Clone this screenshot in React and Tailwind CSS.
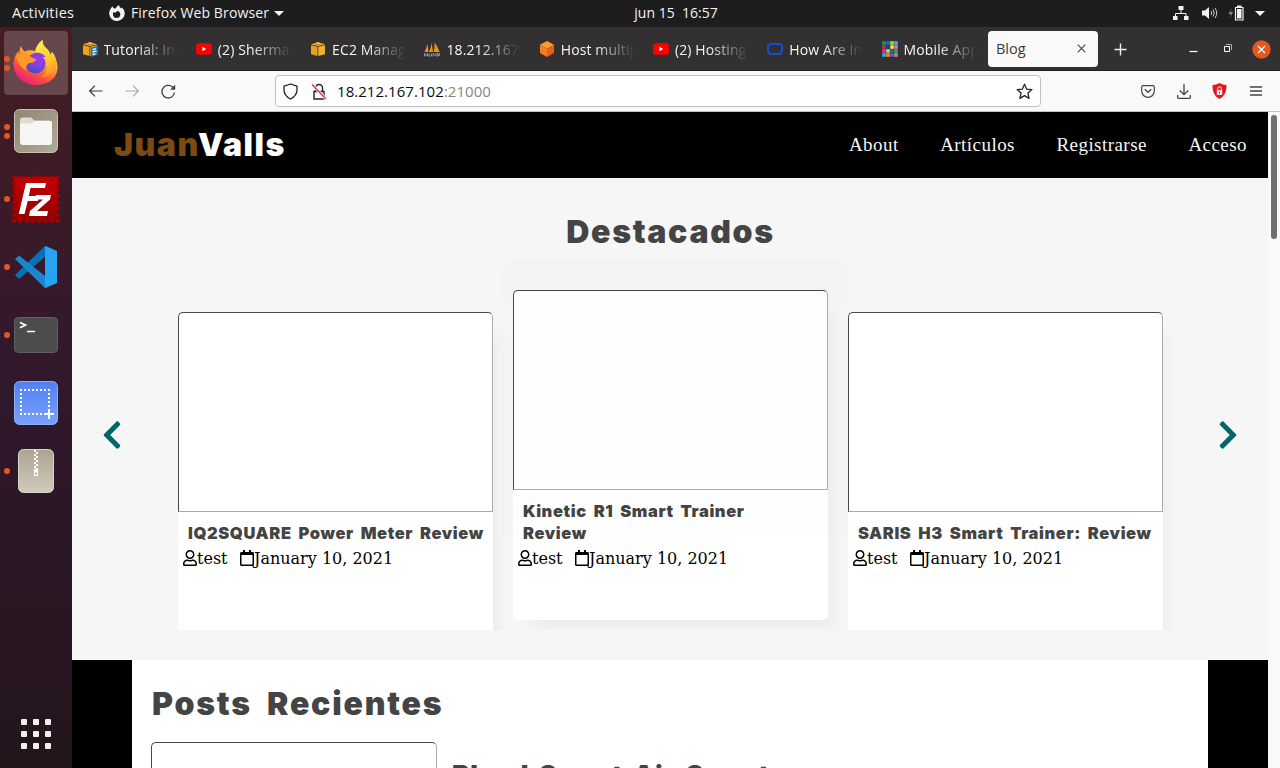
import React from 'react';
import { FaRegUser, FaRegCalendar, FaChevronLeft, FaChevronRight } from 'react-icons/fa';

const Youtube = () => (
  <svg width="16" height="16" viewBox="0 0 16 16"><rect y="2.2" width="16" height="11.6" rx="3" fill="#f00" /><path d="M6.4 5.8v4.4L10.2 8z" fill="#fff" /></svg>
);

const Cube = ({ page }) => (
  <svg width="16" height="16" viewBox="0 0 16 16">
    <path d="M1 3.500 8 1l7 2.500-7 1.600z" fill="#fbbf3b" />
    <path d="M1 4.300l6.500 1.500V15L1 13.200z" fill="#e9a11f" />
    <path d="M15 4.300 8.300 5.800V15L15 13.200z" fill="#f3b02c" />
    <path d="M3.200 2.600 8 4l4.800-1.400" stroke="#a86d0a" strokeWidth=".8" fill="none" />
    {page && <><path d="M9 6.500 16 5v9l-7 2z" fill="#1b74ab" /><path d="M10.500 8.500l3.500-.7M10.500 11l4-.8M10.500 13.500l3-.6" stroke="#fff" strokeWidth="1.300" /></>}
  </svg>
);

const Sails = () => (
  <svg width="16" height="16" viewBox="0 0 16 16">
    <path d="M.5 11C2 8 3 5 3.500 2.500L4.500 11zM5 11C6.500 8 7.500 4 7.600 1L9 11zM9.700 11c.8-3 1-6 .8-9.500C12.500 4 14.500 8 15.500 11z" fill="#f29111" />
    <path d="M.5 15.500v-3l1.500 2 1.500-2v3M5 12.500v2.500h2.500v-2.500M9 15.500v-3l1.500 2 1.500-2v3M13.500 15.500v-3h2v2h-2" fill="none" stroke="#8c90c4" strokeWidth="1" />
  </svg>
);

const Hexagon = () => (
  <svg width="16" height="16" viewBox="0 0 16 16"><path d="M8 0l7 3.800L8 8 1 3.800z" fill="#ff9a2e" /><path d="M1 3.800 8 8v8l-7-4z" fill="#f47b20" /><path d="M15 3.800 8 8v8l7-4z" fill="#e8611a" /></svg>
);

const BlueFrame = () => (
  <svg width="16" height="16" viewBox="0 0 16 16"><path d="M3 3h10l2 1.500v6L13 13H3l-2-2.500v-6z" fill="none" stroke="#1150d4" strokeWidth="2" strokeLinejoin="round" /></svg>
);

const MOSAIC = ['#0a9e6b', '#1b6fd0', '#b5d334', '#5ba7e0', '#e12b2b', '#0b43a8', '#ffe02e', '#ee6fa8', '#d63a8c', '#b9d66c', '#2f62b9', '#25b15f', '#18b7ee', '#f48a1d', '#7a57a5', '#e26bb0'];
const Mosaic = () => (
  <svg width="16" height="16" viewBox="0 0 16 16">
    {MOSAIC.map((c, i) => <rect key={i} x={(i % 4) * 4 + 0.200} y={Math.floor(i / 4) * 4 + 0.200} width="3.600" height="3.600" fill={c} />)}
  </svg>
);

const TABS = [
  [<Cube page />, 'Tutorial: Ins'],
  [<Youtube />, '(2) Sherma'],
  [<Cube />, 'EC2 Manag'],
  [<Sails />, '18.212.167'],
  [<Hexagon />, 'Host multip'],
  [<Youtube />, '(2) Hosting'],
  [<BlueFrame />, 'How Are In'],
  [<Mosaic />, 'Mobile App'],
];

const FirefoxLogo = () => (
  <svg width="46" height="46" viewBox="0 0 46 46" className="-mt-[2px]">
    <defs>
      <linearGradient id="fx" x1=".8" y1=".05" x2=".25" y2="1"><stop offset="0" stopColor="#fff44f" /><stop offset=".35" stopColor="#ffb32b" /><stop offset=".65" stopColor="#ff5a36" /><stop offset="1" stopColor="#e31587" /></linearGradient>
      <radialGradient id="globe" cx=".65" cy=".3" r=".8"><stop offset="0" stopColor="#a234f0" /><stop offset=".5" stopColor="#7a45e0" /><stop offset="1" stopColor="#3b4fb5" /></radialGradient>
      <linearGradient id="flame" x1=".4" y1="0" x2=".7" y2="1"><stop offset="0" stopColor="#fff04c" /><stop offset=".6" stopColor="#ffc02e" /><stop offset="1" stopColor="#ff8a2a" /></linearGradient>
    </defs>
    <path d="M8 7c.5 2 2 4 3.500 5.500C15 11 19 11 22 12c1-4 3.500-8 7.500-11-.3 4 1.500 6.500 4.500 9 2 2 3 4 3.500 6l1.500-3c4 6 6 12 5.500 17C43.500 39.500 35 46 23 46 11 46 1 38 .5 26 .2 20 2.500 15 5.500 12c0 1 .3 2 .8 2.500C6.500 11.500 7 9 8 7z" fill="url(#fx)" />
    <path d="M29.500 1c-4 3-7.500 8-6.500 13 1 4 6 5 9 9 4 6 1 13-4 15 8 0 14-5 15-12 .8-5-.5-9.500-4-13l-1.500 3c-.5-2-1.500-4-3.500-6-3-2.500-4.800-5-4.500-9z" fill="url(#flame)" />
    <circle cx="22.500" cy="24.500" r="10" fill="url(#globe)" />
    <path d="M3 17c5-3 13-3 15 1 2 1.500 4 1.500 5 2-.5 3-4 4-7 4-2 2-4 4-2 8-5-2-10-8-11-15z" fill="#ff9a2a" />
    <path d="M20 14.500c5-2 11 .5 13 4-3-1-5-1-7 0" fill="#8a3be8" />
  </svg>
);

const FilesLogo = () => (
  <svg width="46" height="46" viewBox="0 0 46 46">
    <defs><linearGradient id="fl" x1="0" y1="0" x2="1" y2="1"><stop offset="0" stopColor="#8f8672" /><stop offset="1" stopColor="#b0aa98" /></linearGradient></defs>
    <rect x="1.500" y="1.500" width="43" height="43" rx="5" fill="url(#fl)" stroke="#c5c0b0" />
    <path d="M7 12q0-2.500 2.500-2.500H18l3.500 3H36q3 0 3 3V20H7z" fill="#dfdcd0" />
    <path d="M7 15.500h11l4-2.500h14.500q2.500 0 2.500 2.500V34q0 3-3 3H10q-3 0-3-3z" fill="#f7f6f4" />
  </svg>
);

const ZillaLogo = () => (
  <svg width="48" height="48" viewBox="0 0 48 48">
    <defs><linearGradient id="fz" x1="0" y1="0" x2="0" y2="1"><stop offset="0" stopColor="#c50000" /><stop offset="1" stopColor="#900000" /></linearGradient></defs>
    <rect x="2" y="2" width="44" height="44" fill="url(#fz)" />
    <rect x="2" y="2" width="44" height="44" fill="none" stroke="#a80000" strokeWidth="4" strokeDasharray="0 6.286" strokeLinecap="round" />
    <path d="M14 8h20l-1 5H18.500l-1.700 8H27l-1 5H15.800L12.500 39H6.800zM24 20h15l-1 4.500L25 36h11l-1 5H17l1-5 13-11.500h-8z" fill="#fff" />
  </svg>
);

const CodeLogo = () => (
  <svg width="44" height="44" viewBox="0 0 44 44">
    <path d="M1 30 31 1l1 10L5 34z" fill="#0871b5" />
    <path d="M1 14 5 10.500l28 22L31 43z" fill="#1787cf" />
    <path d="M31.500 1 43 6v32l-11.500 5q-1 0-.5-2V3q-.5-2 .5-2z" fill="#27a3f2" />
  </svg>
);

const TerminalLogo = () => (
  <svg width="46" height="38" viewBox="0 0 46 38">
    <rect x="1.500" y="1.500" width="43" height="35" rx="4" fill="#4c4c4c" stroke="#60605e" />
    <path d="M7 6.500 12.500 9 7 11.700M14 15.500h8" stroke="#fff" strokeWidth="1.700" fill="none" />
  </svg>
);

const ShotLogo = () => (
  <svg width="46" height="46" viewBox="0 0 46 46">
    <defs><linearGradient id="sh" x1="0" y1="0" x2="0" y2="1"><stop offset="0" stopColor="#5180f2" /><stop offset="1" stopColor="#7ba1fa" /></linearGradient></defs>
    <rect x="1.500" y="1.500" width="43" height="43" rx="5" fill="url(#sh)" stroke="#8eb0f8" />
    <path d="M7 10h30M8 13v22M36 13v16M11 34h20" stroke="#fff" strokeWidth="2" strokeDasharray="2 2" fill="none" />
    <path d="M31 34h10M36 29v10" stroke="#fff" strokeWidth="2" />
  </svg>
);

const ArchiveLogo = () => (
  <svg width="38" height="46" viewBox="0 0 38 46">
    <defs><linearGradient id="ar" x1="0" y1="0" x2="0" y2="1"><stop offset="0" stopColor="#aca48f" /><stop offset="1" stopColor="#cfcbbd" /></linearGradient></defs>
    <rect x="1.500" y="1.500" width="35" height="43" rx="5" fill="url(#ar)" stroke="#d9d6ca" />
    <path d="M18 2v19" stroke="#fff" strokeWidth="2" strokeDasharray="2 2" />
    <path d="M20 4v19" stroke="#fff" strokeWidth="2" strokeDasharray="2 2" />
    <path d="M17 21h4v7h-4z" fill="#fff" /><path d="M18.200 24.500h1.600v2h-1.600z" fill="#999" />
  </svg>
);

const DOCK = [
  [2, <FirefoxLogo />, true],
  [2, <FilesLogo />],
  [1, <ZillaLogo />],
  [1, <CodeLogo />],
  [1, <TerminalLogo />],
  [0, <ShotLogo />],
  [1, <ArchiveLogo />],
];

const Dock = () => (
  <aside className="flex w-[72px] shrink-0 flex-col items-center gap-1 bg-linear-to-b from-[#451c22] via-[#30182d] to-[#23151c] pt-1 pb-[2px]">
    {DOCK.map(([dots, logo, active], i) => (
      <div key={i} className={'relative flex size-16 items-center justify-center rounded ' + (active ? 'bg-[#66484c]' : '')}>
        <span className="absolute left-0 flex h-full flex-col items-center justify-center gap-[3px]">
          {Array.from({ length: dots }, (_, d) => <i key={d} className="block size-[6px] rounded-full bg-[#e95420]" />)}
        </span>
        {logo}
      </div>
    ))}
    <div className="mt-auto flex size-16 items-center justify-center">
      <div className="grid grid-cols-3 gap-[6px]">
        {Array.from({ length: 9 }, (_, i) => <i key={i} className="block size-[6px] rounded-[1px] bg-[#f2f1f0]" />)}
      </div>
    </div>
  </aside>
);

const TopBar = () => (
  <header className="grid h-[27px] shrink-0 grid-cols-[1fr_auto_1fr] items-center bg-[#1d1d1d] pb-px text-[14px] leading-none text-[#f2f2f2]">
    <div className="flex items-center pl-3">
      <span className="w-[97px] text-[14.500px] tracking-[0.250px] whitespace-nowrap">Activities</span>
      <svg width="16" height="16" viewBox="0 0 16 16"><path d="M3.300 1.500 5 3.500 7 3.200C7.500 1.500 9 .5 10 0c0 1.500 1 2.500 2.500 3.500L13 2.500C15 4.500 16 7 15.700 9.200A7.800 7.800 0 0 1 .2 9C0 6 1.500 3.500 3.300 1.500z" fill="#f2f2f2" /><path d="M4 7.200c1.500.8 3.500.4 4-1.200 2 .2 3.300 1.500 3.300 3.400A3.700 3.700 0 0 1 4 10z" fill="#1d1d1d" /></svg>
      <span className="ml-[6px] w-[138px] tracking-[0.120px] whitespace-nowrap">Firefox Web Browser</span>
      <svg className="ml-[5px]" width="10" height="5" viewBox="0 0 10 5"><path d="M0 0h10L5 5z" fill="#f2f2f2" /></svg>
    </div>
    <span className="pl-[72px] whitespace-pre">jun 15  16:57</span>
    <div className="flex items-center justify-end pr-[15px]">
      <svg width="16" height="14" viewBox="0 0 16 14"><path d="M5.500 0h5v4h-5zM0 10h4.500v4H0zM11 10h4.500v4H11z" fill="#f2f2f2" /><path d="M8 4v3M2.500 10V7.500h10.500V10" stroke="#f2f2f2" fill="none" /></svg>
      <svg className="ml-[13px]" width="16" height="14" viewBox="0 0 16 14"><path d="M0 4.500h3L7 1v12L3 9.500H0z" fill="#f2f2f2" /><path d="M9 5q1.500 2 0 4M11 3.500q2.500 3.500 0 7M13 2q3.500 5 0 10" stroke="#ccc" fill="none" /></svg>
      <svg className="ml-[10px]" width="16" height="16" viewBox="0 0 16 16"><path d="M4 3 .5 9H3l-1 4 3-6H2.500z" fill="#888" /><path d="M7.500 2.500h7.500v12.500H7.500z" fill="none" stroke="#f2f2f2" strokeWidth="1.200" /><path d="M9 4h4.500v9.500H9zM9 .5h4.500v2H9z" fill="#f2f2f2" /></svg>
      <svg className="ml-[11px]" width="10" height="5" viewBox="0 0 10 5"><path d="M0 0h10L5 5z" fill="#f2f2f2" /></svg>
    </div>
  </header>
);

const TabStrip = () => (
  <div className="flex h-[44px] shrink-0 items-center border-b border-[#201e1f] bg-[#333031] text-[14px] text-[#f5f5f5]">
    {TABS.map(([icon, label], i) => (
      <div key={i} className="flex w-[114.300px] shrink-0 items-center gap-[6px] pl-[9.500px]">
        <span className="size-4 shrink-0">{icon}</span>
        <span className="-mr-2 w-[80px] overflow-hidden pt-[2px] tracking-[0.120px] whitespace-nowrap [mask-image:linear-gradient(to_right,black_42%,transparent_92%)]">{label}</span>
      </div>
    ))}
    <div className="ml-[1.600px] flex h-9 w-[110px] shrink-0 items-center justify-between rounded bg-[#f9f9f9] pr-3 pl-2 text-[14.500px] text-[#3b3b3b]">
      <span className="pt-px">Blog</span>
      <svg width="9" height="9" viewBox="0 0 9 9"><path d="M.7.7l7.600 7.600M8.300.7.7 8.300" stroke="#444" strokeWidth="1.100" /></svg>
    </div>
    <svg className="mt-[2px] ml-[16px]" width="13" height="13" viewBox="0 0 13 13"><path d="M6.500.5v12M.5 6.500h12" stroke="#eee" strokeWidth="1.400" /></svg>
    <div className="ml-auto flex items-center pr-[9px]">
      <svg width="9" height="10" viewBox="0 0 9 10"><path d="M.5 7.500h8" stroke="#fff" strokeWidth="1.200" /></svg>
      <svg className="ml-[25px]" width="9" height="9" viewBox="0 0 9 9"><path d="M1.500 2.500h5v5h-5z" stroke="#fff" strokeWidth="1" fill="none" /><path d="M3 .5h5.500V6" stroke="#aaa" fill="none" /></svg>
      <svg className="mt-px ml-[20px]" width="19" height="19" viewBox="0 0 19 19"><circle cx="9.500" cy="9.500" r="9.200" fill="#e95420" /><path d="M6 6l7 7M13 6l-7 7" stroke="#fff" strokeWidth="1.200" /></svg>
    </div>
  </div>
);

const Toolbar = () => (
  <div className="flex h-[41px] shrink-0 items-center border-b border-[#c2c2c2] bg-[#f9f9fa]">
    <svg className="ml-[17px]" width="14" height="12" viewBox="0 0 14 12"><path d="M13.500 6H.8M6 .7.7 6 6 11.300" stroke="#3c3c3c" strokeWidth="1.200" fill="none" /></svg>
    <svg className="ml-[22px]" width="14" height="12" viewBox="0 0 14 12"><path d="M.5 6h12.700M8 .7 13.300 6 8 11.300" stroke="#acacac" strokeWidth="1.200" fill="none" /></svg>
    <svg className="ml-[22px]" width="15" height="15" viewBox="0 0 15 15"><path d="M13.500 8.500A6.300 6.300 0 1 1 11.500 3L13 4.500" stroke="#3c3c3c" strokeWidth="1.300" fill="none" /><path d="M14.200.8v5H9.200z" fill="#3c3c3c" /></svg>
    <div className="ml-[99px] flex h-8 w-[766px] shrink-0 items-center rounded border border-[#c0c0c0] bg-white pr-[7px] pl-[7px]">
      <svg width="15" height="17" viewBox="0 0 15 17"><path d="M7.500 1 14 3.200v3.600c0 4-2.500 7.200-6.500 9.200C3.500 14 1 10.800 1 6.800V3.200z" fill="none" stroke="#222" strokeWidth="1.300" strokeLinejoin="round" /></svg>
      <svg className="ml-[13px]" width="16" height="17" viewBox="0 0 16 17"><path d="M3 8.500h10V16H3zM4.500 8V5a3.500 3.500 0 0 1 7 0v3" stroke="#222" strokeWidth="1.400" fill="none" /><path d="M1 1.500 15 16" stroke="#fff" strokeWidth="3" /><path d="M1 1.500 15 16" stroke="#e22850" strokeWidth="1.300" /></svg>
      <span className="ml-[10px] text-[15px] tracking-[0.050px] text-[#0c0c0d]">18.212.167.102<span className="text-[#858585]">:21000</span></span>
      <svg className="ml-auto" width="17" height="17" viewBox="0 0 17 17"><path d="m8.500 1.200 2.100 4.900 5.300.5-4 3.500 1.200 5.300-4.600-2.800-4.600 2.800 1.200-5.300-4-3.500 5.300-.5z" fill="none" stroke="#222" strokeWidth="1.300" strokeLinejoin="round" /></svg>
    </div>
    <div className="ml-auto flex items-center pr-[18px]">
      <svg width="14" height="13" viewBox="0 0 14 13"><path d="M2 .7h10q1.300 0 1.300 1.300v4A6.300 6.300 0 0 1 .7 6V2Q.7.7 2 .7z" stroke="#444" strokeWidth="1.200" fill="none" /><path d="m3.700 4.300 3.300 3 3.300-3" stroke="#444" strokeWidth="1.300" fill="none" /></svg>
      <svg className="ml-[22px]" width="14" height="15" viewBox="0 0 14 15"><path d="M7 0v10.500M2.700 6.500 7 10.700l4.300-4.200M.7 11v2.500q0 .8.8.8h11q.8 0 .8-.8V11" stroke="#444" strokeWidth="1.300" fill="none" /></svg>
      <svg className="ml-[21px]" width="15" height="16" viewBox="0 0 15 16"><path d="M7.500 0c2 1.300 4.500 2 7 2 0 6-1.500 11-7 14C2 13 .5 8 .5 2c2.500 0 5-.7 7-2z" fill="#e8131b" /><path d="M4.800 7.200h5.400v4.600H4.800z" fill="#fff" /><path d="M5.700 7V5.500a1.800 1.800 0 0 1 3.600 0V7" stroke="#fff" fill="none" /><path d="M7.500 8.500v2" stroke="#e8131b" /></svg>
      <svg className="ml-[23px]" width="12" height="10" viewBox="0 0 12 10"><path d="M0 1h12M0 5h12M0 9h12" stroke="#444" strokeWidth="1.300" /></svg>
    </div>
  </div>
);

const Card = ({ title, featured }) => (
  <article className={'flex w-[315px] shrink-0 flex-col bg-white shadow-[12px_16px_16px_-6px_rgba(0,0,0,0.040)] ' + (featured ? 'mt-[30px] h-[330px] rounded-[5px]' : 'mt-[52px] h-[330px] rounded-t-[5px]')}>
    <div className="h-[200px] shrink-0 rounded-t-[5px] border border-t-[#494949] border-r-[#acacac] border-b-[#acacac] border-l-[#494949]" />
    <h4 className="mt-[10px] pl-[10px] font-['Inter'] text-[16.500px] leading-[22px] font-black tracking-[0.600px] whitespace-pre text-[#444] [word-spacing:3px]">{title}</h4>
    <p className="mt-[5px] flex items-center pl-[5px] font-['DejaVu_Serif',serif] text-[16px] leading-[20px] text-black">
      <FaRegUser className="-mt-[2px] w-[14px]" /><span className="w-[43px]">test</span><FaRegCalendar className="-mt-[2px] w-[14px]" />January 10, 2021
    </p>
  </article>
);

const GhostDialog = () => (
  <div className="pointer-events-none absolute top-[83px] left-[430px] h-[275px] w-[346px] rounded-t-lg bg-black/[0.004] text-[12px] leading-[22px] text-black/[0.018]">
    <div className="flex h-[38px] items-center justify-between rounded-t-lg bg-black/[0.006] pt-[2px] pr-5 pl-[85px] text-[11.500px] text-white/40"><span>Cancel</span><span>Take Screenshot</span></div>
    <div className="flex flex-col pl-[11px]">
      <b className="mt-[2px]">Take Screenshot</b>
      <div className="flex flex-col pl-[66px]"><span>Grab the whole screen</span><span>Grab the current window</span><span>Select area to grab</span></div>
      <div className="mt-[5px] flex justify-between pr-[30px] pl-[47px]"><span>Grab after a delay of&nbsp;&nbsp;&nbsp;0</span><span>seconds</span></div>
      <b className="mt-[13px]">Effects</b>
      <span className="pl-[28px]">Include pointer</span>
      <span className="pl-[28px]">Include the window border</span>
    </div>
  </div>
);

const Page = () => (
  <main className="flex min-h-0 flex-1 overflow-hidden bg-[#f9f9f9]">
    <div className="flex w-[1196px] shrink-0 flex-col overflow-hidden">
      <nav className="flex h-[66px] shrink-0 items-center bg-black pr-[21px] pl-[42px]">
        <div className="font-['Inter'] text-[32px] leading-none font-black tracking-[1.500px] text-white"><span className="text-[#7c4b11]">Juan</span>Valls</div>
        <div className="ml-auto flex gap-[41.500px] font-['Liberation_Serif',serif] text-[19px] tracking-[0.450px] text-[#f5f5f5]">
          <span>About</span><span>Artículos</span><span>Registrarse</span><span>Acceso</span>
        </div>
      </nav>
      <section className="relative flex h-[482px] shrink-0 flex-col bg-[#f6f6f6]">
        <h2 className="mt-[31px] pl-[1px] text-center font-['Inter'] text-[32px] leading-[45px] font-black tracking-[1.700px] text-[#444]">Destacados</h2>
        <div className="mt-[6px] flex h-[370px]">
          <div className="flex w-[96px] shrink-0 justify-center pt-[159px] pr-[16px] text-[#006669]"><FaChevronLeft size={32} /></div>
          <div className="flex w-[1005px] gap-5 overflow-hidden pl-[10px]">
            <Card title="IQ2SQUARE Power Meter Review" />
            <Card title={'Kinetic R1 Smart Trainer\nReview'} featured />
            <Card title="SARIS H3 Smart Trainer: Review" />
          </div>
          <div className="flex w-[95px] shrink-0 justify-center pt-[159px] pl-[15px] text-[#006669]"><FaChevronRight size={32} /></div>
        </div>
        <GhostDialog />
      </section>
      <section className="flex min-h-0 flex-1 bg-black px-[60px]">
        <div className="flex flex-1 flex-col bg-white pl-[19px]">
          <h2 className="mt-[21px] pl-[1px] font-['Inter'] text-[32px] leading-[45px] font-black tracking-[1.800px] text-[#444] [word-spacing:7px]">Posts Recientes</h2>
          <div className="mt-4 flex">
            <div className="h-[200px] w-[286px] shrink-0 rounded-t-[5px] border border-t-[#494949] border-r-[#acacac] border-b-[#acacac] border-l-[#494949]" />
            <h3 className="mt-[15px] ml-[15px] font-['Inter'] text-[26px] leading-[36px] font-black tracking-[0.900px] text-[#444] [word-spacing:4px]">Bkool Smart Air Smart</h3>
          </div>
        </div>
      </section>
    </div>
    <div className="w-3 pt-[3px] pl-[3px]"><div className="h-[124px] w-[6px] rounded-full bg-[#6f6f6f]" /></div>
  </main>
);

export default function App() {
  return (
    <div className="flex h-[768px] w-[1280px] flex-col overflow-hidden bg-white font-['Open_Sans','Noto_Sans',sans-serif]">
      <TopBar />
      <div className="flex min-h-0 flex-1">
        <Dock />
        <div className="flex min-w-0 flex-1 flex-col">
          <TabStrip />
          <Toolbar />
          <Page />
        </div>
      </div>
    </div>
  );
}
